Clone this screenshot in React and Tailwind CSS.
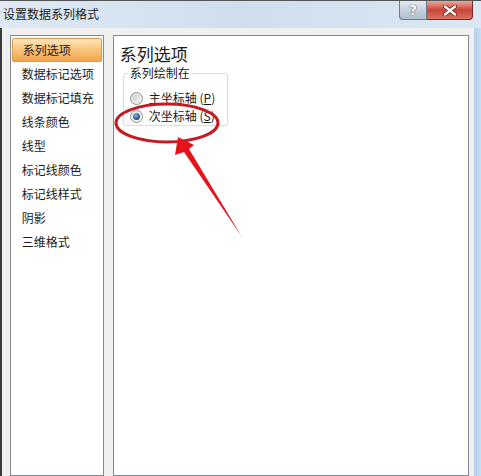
import React from "react";

const font = { fontFamily: '"Noto Sans CJK SC", "Noto Sans", sans-serif' };

function Radio({ checked }) {
  return (
    <div className="w-[13px] h-[13px] rounded-full border border-[#8e8f8f] bg-gradient-to-br from-[#e6e6e6] to-[#fdfdfd] flex items-center justify-center shrink-0">
      {checked ? (
        <div className="w-[7px] h-[7px] rounded-full bg-[radial-gradient(circle_at_40%_35%,#7fb4e0,#1d4f82_70%)]" />
      ) : (
        <div className="w-[9px] h-[9px] rounded-full bg-gradient-to-br from-[#cfcfcf] to-[#f4f4f4]" />
      )}
    </div>
  );
}

export default function App() {
  const items = ["系列选项", "数据标记选项", "数据标记填充", "线条颜色", "线型", "标记线颜色", "标记线样式", "阴影", "三维格式"];
  return (
    <div className="relative w-[481px] h-[476px] overflow-hidden bg-[#f0f0f0] flex flex-col text-[#1a1a1a]" style={font}>
      {/* title bar */}
      <div className="h-[28px] shrink-0 flex items-start justify-between border-t border-[#555] bg-gradient-to-r from-[#dfe9f5] via-[#cfdeee] to-[#dbe7f4]">
        <div className="pl-[3px] pt-[5px] text-[12px] leading-[16px]">设置数据系列格式</div>
        <div className="flex mr-[8px]">
          <div className="w-[28px] h-[19px] rounded-bl-[4px] border border-t-0 border-[#6d7b8c] bg-gradient-to-b from-[#e3e9f1] via-[#c8d3df] to-[#aebdcd] flex items-center justify-center">
            <span className="text-[14px] font-bold text-white leading-[14px] [text-shadow:0_0_1px_#3a4a60,0_0_1px_#3a4a60]" style={{ fontFamily: '"DejaVu Sans", sans-serif' }}>?</span>
          </div>
          <div className="w-[46px] h-[19px] rounded-br-[4px] border border-t-0 border-l-0 border-[#7a2a22] bg-gradient-to-b from-[#e9a898] via-[#c8443a] to-[#d87060] flex items-center justify-center">
            <svg width="14" height="11" viewBox="0 0 14 11">
              <path d="M2 1.5 L12 9.5 M12 1.5 L2 9.5" stroke="#6a1d16" strokeWidth="4" strokeLinecap="round" />
              <path d="M2 1.5 L12 9.5 M12 1.5 L2 9.5" stroke="#ffffff" strokeWidth="2.4" strokeLinecap="round" />
            </svg>
          </div>
        </div>
      </div>
      {/* body */}
      <div className="flex-1 flex">
        <div className="w-[2px] bg-[#3c3c3c]" />
        <div className="flex-1 flex pl-[8px] pt-[7px] gap-[9px]">
          {/* left list */}
          <div className="w-[94px] border border-[#828790] bg-white pt-[2px] px-[1px]">
            {items.map((t, i) => (
              <div
                key={t}
                className={
                  "h-[24px] flex items-center pl-[10px] text-[12px] whitespace-nowrap " +
                  (i === 0
                    ? "rounded-[2px] border border-[#d49a54] bg-gradient-to-b from-[#fde7b8] via-[#f9c47a] to-[#f3a34a]"
                    : "")
                }
              >
                {t}
              </div>
            ))}
          </div>
          {/* right panel */}
          <div className="w-[356px] border border-[#828790] bg-white pl-[6px] pt-[8px]">
            <div className="text-[17px] leading-[20px]">系列选项</div>
            <fieldset className="ml-[3px] mt-[1px] w-[105px] h-[61px] border border-[#d5dfe5] rounded-[3px] pl-[6px]">
              <legend className="px-[2px] ml-[-2px] text-[12px] leading-[16px]">系列绘制在</legend>
              <div className="flex items-center gap-[6px] mt-[8px] h-[18px] text-[12px]">
                <Radio checked={false} />
                <span>主坐标轴 (<span className="underline">P</span>)</span>
              </div>
              <div className="flex items-center gap-[6px] h-[18px] text-[12px]">
                <Radio checked={true} />
                <span>次坐标轴 (<span className="underline">S</span>)</span>
              </div>
            </fieldset>
          </div>
        </div>
        <div className="w-[6px]" />
        <div className="w-[7px] bg-gradient-to-r from-[#b4cfec] to-[#c9ddf2]" />
      </div>
      {/* annotation overlay */}
      <svg className="absolute inset-0 pointer-events-none" width="481" height="476" viewBox="0 0 481 476">
        <ellipse cx="167" cy="123" rx="51" ry="19" fill="none" stroke="#c41a20" strokeWidth="3" />
        <polygon points="178,137 194,145 189,149 242,237 184,152 175,155" fill="#e3141c" />
      </svg>
    </div>
  );
}
